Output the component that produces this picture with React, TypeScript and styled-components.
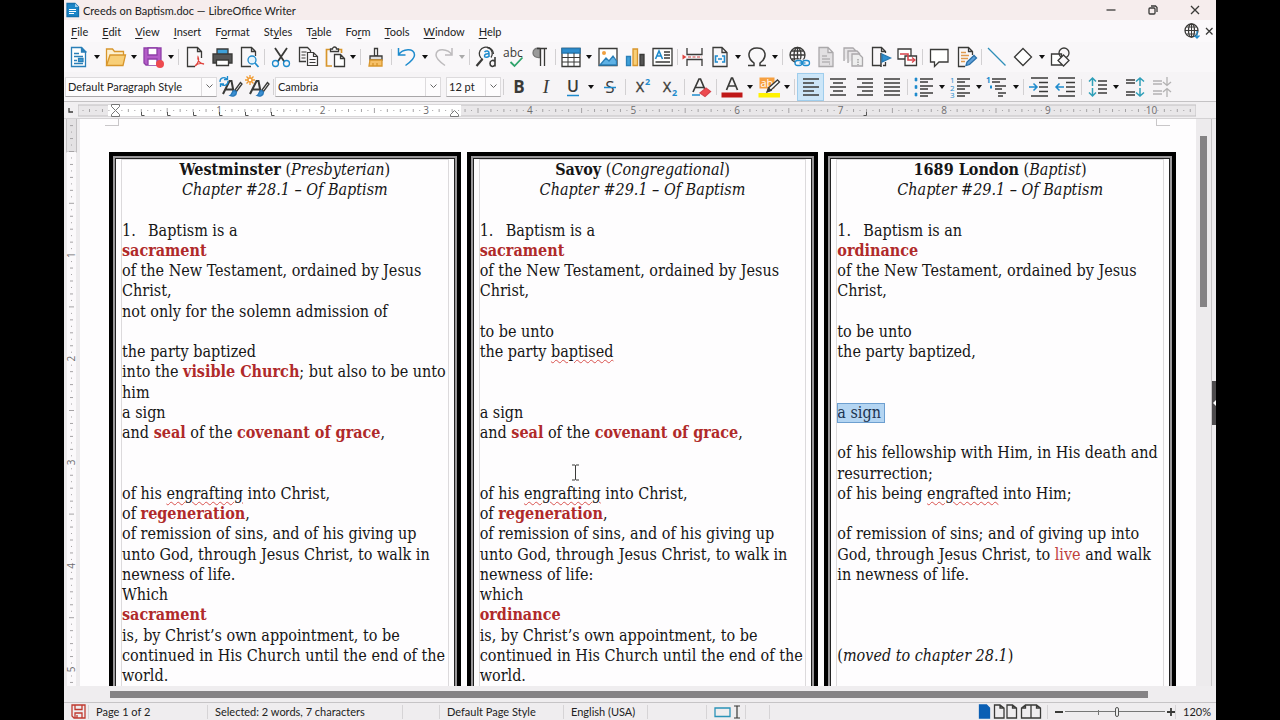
import React from "react";
import styled, { createGlobalStyle, css } from "styled-components";

const ui = `Lato, "Open Sans", sans-serif`;
const serif = `"DejaVu Serif Condensed", "DejaVu Serif", serif`;
const K = "#3a3a38";
const B = "#1e8bcd";
const INCH = 103.6;

const Global = createGlobalStyle`
  *, *::before, *::after { box-sizing: border-box; }
  body { margin: 0; background: #000; }
  button, input { font: inherit; color: inherit; }
  svg { display: block; flex: none; overflow: visible; }
`;

const Desktop = styled.div`
  height: 100vh;
  min-height: 400px;
  padding: 0 5vw;
  background: #000;
  overflow: hidden;
`;

const Window = styled.div`
  display: flex;
  flex-direction: column;
  height: 100%;
  overflow: hidden;
  background: #f3f1f3;
  color: #222;
  font-family: ${ui};
  font-size: 11px;
`;

const TitleBar = styled.header`
  display: flex;
  align-items: center;
  flex: 0 0 20px;
  padding-left: 2px;
  background: #f6eded;
`;

const Title = styled.h1`
  flex: 1;
  margin: 0 0 0 4px;
  font-size: 11px;
  font-weight: 400;
`;

const PlainButton = styled.button`
  display: flex;
  align-items: center;
  justify-content: center;
  padding: 0;
  border: 0;
  background: none;
`;

const WindowButton = styled(PlainButton)`
  width: 42px;
  height: 20px;
`;

const MenuBar = styled.nav`
  display: flex;
  align-items: center;
  flex: 0 0 22px;
  gap: 14px;
  padding-left: 7px;
  background: #fbf9fb;
`;

const MenuButton = styled(PlainButton)`
  u { text-underline-offset: 2px; }
`;

const MenuEnd = styled.div`
  display: flex;
  align-items: center;
  gap: 4px;
  margin-left: auto;
  padding-right: 2px;
`;

const Toolbar = styled.div<{ $line?: boolean }>`
  display: flex;
  align-items: center;
  flex: 0 0 30px;
  padding-left: 1px;
  background: ${(p) => (p.$line ? "#f6f4f6" : "#f9f7f9")};
  border-bottom: ${(p) => (p.$line ? "1px solid #c4c2c4" : "0")};
`;

const Tool = styled(PlainButton)<{ $active?: boolean }>`
  flex: 0 0 27px;
  height: 28px;
  ${(p) =>
    p.$active &&
    css`
      background: #cce6f8;
      border: 1px solid #9fcdec;
    `}
`;

const DropButton = styled(PlainButton)`
  flex: 0 0 10px;
  height: 28px;
`;

const Divider = styled.span<{ $narrow?: boolean }>`
  flex: 0 0 ${(p) => (p.$narrow ? 4 : 5)}px;
  height: 16px;
  background: linear-gradient(#d2d0d2, #d2d0d2) center / 1px 100% no-repeat;
`;

const Combo = styled.div<{ $width: number; $gap?: number }>`
  display: flex;
  flex: 0 0 ${(p) => p.$width}px;
  min-width: 0;
  width: ${(p) => p.$width}px;
  height: 20px;
  margin-right: ${(p) => p.$gap || 0}px;
  border: 1px solid #dddbdd;
  border-bottom-color: #a8a6a8;
  background: #fdfcfd;
`;

const ComboInput = styled.input`
  flex: 1;
  width: 0;
  min-width: 0;
  padding: 0 2px;
  border: 0;
  outline: 0;
  background: none;
`;

const ComboArrow = styled(PlainButton)`
  flex: 0 0 15px;
  border-left: 1px solid #dddbdd;
`;

const RulerRow = styled.div`
  display: flex;
  flex: 0 0 17px;
  background: #f1eff1;
  border-bottom: 1px solid #d4d2d4;
`;

const TabKind = styled(PlainButton)`
  flex: 0 0 14px;
`;

const RulerTrack = styled.div`
  flex: 1;
  min-width: 0;
  margin-right: 20px;
  overflow: hidden;
`;

const Workspace = styled.main`
  display: flex;
  flex: 1;
  min-height: 0;
  background: #edebed;
`;

const SideRuler = styled.div`
  flex: 0 0 16px;
  overflow: hidden;
`;

const Page = styled.article`
  position: relative;
  display: grid;
  grid-template-columns: repeat(3, 1fr);
  gap: 6px;
  flex: 1;
  min-width: 0;
  padding: 33px 20px 0 29px;
  overflow: hidden;
  background: #fefdfe;
`;

const Crop = styled.span<{ $right?: boolean }>`
  position: absolute;
  top: 0;
  width: 14px;
  height: 7px;
  border-bottom: 1px solid #c9c7c9;
  ${(p) =>
    p.$right
      ? "right: 26px; border-left: 1px solid #c9c7c9;"
      : "left: 25px; border-right: 1px solid #c9c7c9;"}
`;

const Frame = styled.section`
  min-width: 0;
  height: 640px;
  padding: 1px 8px 0 8px;
  border: 4px solid #000;
  box-shadow: inset 0 0 0 2px #9a989a, inset 0 0 0 3px #222;
`;

const Column = styled.div`
  height: 100%;
  margin-top: 2px;
  border: 1px solid #dcdadc;
  border-bottom: 0;
  color: #161616;
  font-family: ${serif};
  font-size: 16px;
  line-height: 20px;
  white-space: nowrap;
`;

const Line = styled.p<{ $center?: boolean }>`
  height: 20px;
  margin: 0;
  text-align: ${(p) => (p.$center ? "center" : "left")};
  &:nth-child(4n + 3) { margin-bottom: 1px; }
`;

const Num = styled.span`
  display: inline-block;
  width: 26px;
`;

const Key = styled.strong`
  color: #b02a2a;
`;

const Soft = styled.span`
  color: #c0403c;
`;

const Misspelt = styled.span`
  text-decoration: underline wavy #d9534f 1px;
  text-underline-offset: 2px;
`;

const Selected = styled.mark`
  display: inline-block;
  height: 20px;
  padding-right: 4px;
  background: #b4d5f2;
  outline: 1px solid #6d9fd0;
  outline-offset: -1px;
  color: #1c3350;
`;

const ScrollY = styled.div`
  flex: 0 0 16px;
  padding: 17px 4px 0 4px;
  border-right: 1px solid #c6c4c6;
`;

const ThumbY = styled.div`
  width: 7px;
  height: 171px;
  background: #858385;
`;

const SideHandle = styled.div`
  display: flex;
  align-items: center;
  flex: 0 0 4px;
`;

const HandleButton = styled(PlainButton)`
  width: 4px;
  height: 44px;
  background: #4d4b4d;
`;

const ScrollX = styled.div`
  display: flex;
  align-items: center;
  flex: 0 0 16px;
  padding: 0 68px 0 46px;
  background: #efedef;
  &::before { content: ""; flex: 1; height: 7px; background: #858385; }
`;

const StatusBar = styled.footer`
  display: flex;
  align-items: center;
  flex: 0 0 18px;
  border-top: 1px solid #c6c4c6;
  background: #efedef;
`;

const Cell = styled.div<{ $w: number; $end?: boolean; $plain?: boolean }>`
  display: flex;
  align-items: center;
  flex: 0 0 ${(p) => p.$w}px;
  min-width: 0;
  height: 14px;
  padding-left: 7px;
  margin-left: ${(p) => (p.$end ? "auto" : "0")};
  border-right: 1px solid ${(p) => (p.$plain ? "transparent" : "#d6d4d6")};
  white-space: nowrap;
`;

const ZoomRange = styled.input`
  flex: 0 0 100px;
  width: 100px;
  height: 14px;
  margin: 0 2px;
  appearance: none;
  background: linear-gradient(#777, #777) center / 100% 1px no-repeat,
    linear-gradient(#777, #777) 33px 5px / 1px 5px no-repeat;
  &::-webkit-slider-thumb {
    appearance: none;
    width: 4px;
    height: 10px;
    border: 1px solid #555;
    border-radius: 2px;
    background: #eee;
  }
`;

const Pointer = styled.div`
  position: absolute;
  left: 44%;
  top: 345px;
`;

const Svg = ({ children, w = 24, h = 24 }: { children: React.ReactNode; w?: number; h?: number }) => (
  <svg width={w} height={h} viewBox={`0 0 ${w} ${h}`} fill="none" stroke={K} strokeWidth="1.3" aria-hidden="true">
    {children}
  </svg>
);

const sheet = "M5 2.5h9l5 5v14H5z M14 2.5v5h5";
const brushA = (
  <>
    <path d="M4 19 10.500 6h2L15 19M7 14.500h7" strokeWidth="2" />
    <path d="M21.500 7.500 16 15l1.500 1.500L23 9z" fill="#fff" />
    <path d="M15.500 15.500c-3 0-2 4-4.500 5 3 1.500 6.500 0 6.500-3.500z" fill="#3b8fd2" stroke="#2878b8" />
  </>
);
const bars = (rows: [number, number, number][]) =>
  rows.map(([y, a, b]) => <path key={y} d={`M${a} ${y}H${b}`} strokeWidth="1.500" />);

const icons: Record<string, React.ReactNode> = {
  new: <><path d="M4.500 2.500h10l4 4v15h-14z" stroke="#2a7fb8" fill="#fff" /><path d="M14.500 2v5h5" fill="#2a7fb8" stroke="#2a7fb8" /><path d="M7 8.500h5M7 11.500h9M7 18.500h9M7 15.500h3" stroke="#2a7fb8" strokeWidth="1.500" /><path d="M11.500 13.500h4.500v3h-4.500z" fill="#3fa0d8" stroke="#2a7fb8" /></>,
  open: <><path d="M2.500 20V4h6l2 2.500h9V10" fill="#fdf0d0" stroke="#d8962c" /><path d="M2.500 20.500 6 10h15.500L19 20.500z" fill="#f8cf78" stroke="#d8962c" /></>,
  save: <><path d="M3 3h17v17H5l-2-2z" fill="#b45cc8" stroke="#8f3fa8" /><path d="M7 3h9v7H7z" fill="#fff" stroke="#8f3fa8" /><path d="M7 20v-6h9v6" fill="#fff" stroke="#8f3fa8" /><circle cx="19" cy="19" r="4" fill="#ee4a4f" stroke="none" /></>,
  pdf: <><path d="M12 21.500H4.500v-19h10l4 4V13M14.500 2.500v4h4" fill="none" /><path d="M12 21c4-3 4-7 3-9-1 3 2 7 6 7-3-1-7 0-9 2z" stroke="#e0443e" /></>,
  print: <><path d="M7 9V4h11v5" fill="#3fa0d8" stroke={K} /><path d="M3 9h19v9H3z" fill="#555" stroke={K} /><path d="M6.500 15h12v5.500h-12z" fill="#fff" /></>,
  preview: <><path d="M14 21.500H4.500v-19h10l4 4V11M14.500 2.500v4h4" /><circle cx="15" cy="15" r="4" stroke={B} fill="#e6f4fc" /><path d="m18 18 3.500 4" stroke={B} strokeWidth="1.800" /></>,
  cut: <><path d="M6 3 15.500 17M18 3 8.500 17" strokeWidth="1.800" /><circle cx="6.500" cy="18.500" r="3" stroke={B} /><circle cx="17.500" cy="18.500" r="3" stroke={B} /></>,
  copy: <><path d="M10 16.500H3.500v-14h8l3 3V7" /><path d="M11.500 7.500h6l4 4v9h-10zM17.500 7.500v4h4M5.500 7h5M5.500 10h4M5.500 13h4M13.500 14.500h6M13.500 17.500h6" strokeWidth="1.200" /></>,
  paste: <><path d="M9 21H3.500V4.500H7M15 4.500h3.500V8" stroke="#d8962c" strokeWidth="1.700" /><path d="M7.500 6.500V4h2a2 2 0 0 1 4 0h2v2.500z" fill="#fff" /><path d="M11.500 9.500h6l4 4v8h-10zM17.500 9.500v4h4" fill="#fff" /></>,
  brush: <><path d="M10.500 3.500h3V11h-3z" fill="#fff" /><path d="M6 11h12v4H6z" fill="#ddd" /><path d="M6 15h12v6H5z" fill="#f6c068" stroke="#d8962c" /><path d="M9 21v-3M13 21v-3" stroke="#d8962c" /></>,
  undo: <path d="M3.500 3v7h7M3.500 10c4-6.500 16-7.500 16 0 0 4-4 7-9 10.500" stroke={B} strokeWidth="1.500" />,
  redo: <path d="M20 3v7h-7M20 10c-4-6.500-16-7.500-16 0 0 4 4 7 9 10.500" stroke="#bdbbbd" strokeWidth="1.500" />,
  find: <><path d="M17 12.500A6.500 6.500 0 1 0 9 14.500" /><path d="M19.500 9A6.500 6.500 0 0 0 13 2.500" /><path d="m8.500 14-6 7" strokeWidth="2.200" /><path d="M10.500 7c2-2 4.500-1 4.500 1v4M15 9c-3-.500-4.500.500-4.500 2s3 2 4.500 0" stroke={B} strokeWidth="1.500" /><path d="M21 12v9.500M21 16.500c-2-2-5-1-5 2s3 4 5 1.500" strokeWidth="1.600" /></>,
  spell: <><text x="2" y="12" fontSize="12" fontFamily="Open Sans" fill={K} stroke="none">abc</text><path d="m9.500 17 4 4 8-8.500" stroke="#2fa36b" strokeWidth="1.800" /></>,
  pilcrow: <><path d="M12 3.500C7 2.500 5 5 5 8s2.500 5 7 4.500z" fill="#9a9a9a" stroke="#777" /><path d="M9 3.500h10M12.500 3.500V21M16.500 3.500V21" /></>,
  table: <><path d="M3 3.500h18v18H3z" fill="#fff" /><path d="M3 3.500h18V8H3z" fill="#2f8fd0" stroke="#2678b0" /><path d="M3 12.500h18M3 17h18M9 8v13M15 8v13" strokeWidth="1" /></>,
  image: <><path d="M3 3.500h18v17H3z" fill="#fff" /><circle cx="8" cy="8" r="2" fill="#f0a040" stroke="none" /><path d="m4 20 6-7 3 3 4-5 3.500 5v4z" fill="#5fb2e6" stroke="#2a7fb8" /></>,
  chart: <><path d="M3.500 11.500h4v9h-4z" fill="#3fa0d8" stroke="#2a7fb8" /><path d="M10 4h4.500v16.500H10z" fill="#f8cf78" stroke="#d8962c" /><path d="M17 9.500h4v11h-4z" fill="#555" /></>,
  textbox: <><path d="M3 3.500h19v17H3z" fill="#fff" /><path d="m5.500 14 3.500-8 3.500 8M7 11h4" stroke={B} strokeWidth="1.600" /><path d="M14 7h6M14 10h6M14 13h6M5.500 17h14.500" /></>,
  pagebreak: <><path d="M6 3v6.500h15V3M6 21v-6.500h15V21" /><path d="M7 12h14" stroke="#e08080" strokeDasharray="3 1.500" /><path d="m1.500 9.500 4 2.500-4 2.500z" fill="#e0443e" stroke="none" /></>,
  field: <><path d={sheet} /><path d="M10 11H7.500v6H10M14 11h2.500v6H14M10 14h4" stroke={B} strokeWidth="1.600" /></>,
  omega: <path d="M3 20.500h6V18C1 12 3 3 12 3s11 9 3 15v2.500h6" strokeWidth="1.500" />,
  link: <><circle cx="10.500" cy="10" r="7.500" /><path d="M3 10h15M10.500 2.500v15M4.500 6h12M4.500 14h8" /><ellipse cx="10.500" cy="10" rx="3.500" ry="7.500" /><path d="M8 14.500h15v7H8z" fill="#f9f7f9" stroke="none" /><rect x="8" y="15.500" width="7" height="5" rx="2.500" stroke={B} /><rect x="15.500" y="15.500" width="7" height="5" rx="2.500" stroke={B} /><path d="M12.500 18h6" stroke={B} /></>,
  footnote: <><path d={sheet} fill="#e2e0e2" stroke="#aaa8aa" /><path d="M8 17h8M8 14h8M8 11h5M15 19h1" stroke="#b5b3b5" /></>,
  endnote: <><path d="M3 16V3h9l3 3M7 18V6h9l3 3" fill="#e8e6e8" stroke="#aaa8aa" /><path d="M11 9h7l3.500 3.500V21H11z" fill="#eee" stroke="#aaa8aa" /><path d="M17 14v6" stroke="#999" strokeDasharray="1.500 1" /></>,
  bookmark: <><path d="M13 20.500H4.500v-18h9l4 4V8M13.500 2.500v4h4M17.500 17v3.500H15" /><path d="M13 8v14" strokeWidth="1.500" /><path d="m14 9 8.500 4-8.500 4z" fill="#2f8fd0" stroke="#2678b0" /></>,
  crossref: <><path d="M3 4h13v10H3z" fill="#fff" /><path d="M10 11h11.500v9.500H10z" fill="#fff" /><path d="M5 9h8v6h6" stroke="#d8444c" strokeWidth="1.600" /><path d="m17 12.500 3 2.500-3 2.500" stroke="#d8444c" /></>,
  comment: <path d="M3.500 4.500h17.500V17H12l-4.500 4.500V17h-4z" fill="#fff" />,
  track: <><path d="M11 21.500H4.500v-19h10l4 4V10M14.500 2.500v4h4" /><path d="M7 7.500h5M7 10.500h8M7 13.500h7M7 16.500h4" stroke="#e09a50" /><path d="m12 20.500 1-3.500 7-6.500 2.500 2.500-7 6.500z" fill="#5f9fd8" stroke="#2a6fa8" /></>,
  line: <path d="M3 3 20.500 20.500" stroke="#2f8fb8" />,
  shapes: <path d="m11 3.500 8.500 8.500-8.500 8.500L2.500 12z" fill="#fff" />,
  draw: <><path d="M2.500 9h10v11h-10z" fill="#fff" /><circle cx="15" cy="8" r="5" /><path d="m14.500 10 5.500 5.500-5.500 5.500-5.500-5.500z" fill="#f9f7f9" /></>,
  styleUpdate: <>{brushA}<path d="M1 7a4 4 0 0 1 7-3M8.500 1v3.500H5M9 6a4 4 0 0 1-7 3M1.500 12V9H5" stroke={B} /></>,
  styleNew: <>{brushA}<path d="M4 0v10M-1 5h10M.500 1.500l7 7M7.500 1.500l-7 7" stroke="#f09a30" /><circle cx="4" cy="5" r="2" fill="#fff" stroke="#f09a30" /></>,
  clear: <><path d="m4 17 6-13h1.500L17 17M6.500 12.500h8.500" strokeWidth="1.700" /><path d="M3 20h8" stroke={B} strokeWidth="1.500" /><path d="m11 18 6-5 4.500 3.500-5.500 5z" fill="#ee4a4f" stroke="#d8444c" /></>,
  color: <><path d="m6.500 15 5-12h1l5 12M8 11h8" strokeWidth="1.700" /><path d="M1.500 17.500h21v5h-21z" fill="#c01818" stroke="none" /></>,
  highlight: <><path d="M2.500 2.500h15v11h-15z" fill="#f6a040" stroke="none" /><text x="3.500" y="11.500" fontSize="11" fontFamily="Open Sans" fill="#fff" stroke="none">ab</text><path d="M1.500 18h21.500v4.500H1.500z" fill="#fff200" stroke="none" /><path d="m10.500 16.500 1.500-4L20.500 5l2 2-8.500 8z" fill="#fff" /><path d="m10 17 1.500-4 2.500 2.500z" fill={K} /></>,
  left: bars([[4, 4, 20], [8, 4, 15], [12, 4, 20], [16, 4, 15], [20, 4, 20]]),
  center: bars([[4, 4, 20], [8, 7, 17], [12, 4, 20], [16, 7, 17], [20, 4, 20]]),
  right: bars([[4, 4, 20], [8, 9, 20], [12, 4, 20], [16, 9, 20], [20, 4, 20]]),
  justify: bars([[4, 4, 20], [8, 4, 20], [12, 4, 20], [16, 4, 20], [20, 4, 20]]),
  bullets: <><path d="M3 3h2v3H3zM3 10.500h2v3H3zM3 18h2v3H3z" fill={B} stroke={B} strokeWidth=".6" />{bars([[4, 8, 21], [7, 8, 16], [11, 8, 21], [14, 8, 16], [18, 8, 21], [21, 8, 16]])}</>,
  numbers: <><g fontSize="8" fontFamily="Open Sans" fill={B} stroke="none"><text x="1" y="8">1</text><text x="1" y="15.500">2</text><text x="1" y="23">3</text></g>{bars([[4, 8, 21], [7, 8, 16], [11, 8, 21], [14, 8, 16], [18, 8, 21], [21, 8, 16]])}</>,
  outline: <><text x="0" y="8" fontSize="8" fontWeight="700" fontFamily="Open Sans" fill={B} stroke="none">1</text><path d="M4 10.500h2v3H4z" fill={B} stroke="none" />{bars([[4, 6, 20], [7, 6, 14], [11, 9, 20], [14, 9, 16], [18, 12, 20], [21, 12, 17]])}</>,
  indent: <>{bars([[3, 4, 21], [7.5, 12, 21], [12, 12, 21], [16.5, 12, 21], [21, 4, 21]])}<path d="M2 12h8M6.500 8.500 10 12l-3.500 3.500" stroke={B} strokeWidth="1.500" /></>,
  outdent: <>{bars([[3, 4, 21], [7.5, 12, 21], [12, 12, 21], [16.5, 12, 21], [21, 4, 21]])}<path d="M2 12h8M5.500 8.500 2 12l3.500 3.500" stroke={B} strokeWidth="1.500" /></>,
  spacing: <>{bars([[6, 12, 21], [10, 12, 21], [14, 12, 21], [18, 12, 21]])}<path d="M6.500 3v8M3 6.500 6.500 3 10 6.500M6.500 13v8M3 17.500 6.500 21l3.500-3.500" stroke="#2f9fb8" strokeWidth="1.500" /></>,
  paraUp: <>{bars([[5, 3, 12], [8, 3, 12], [17, 3, 12], [20, 3, 12]])}<path d="M17 3v8M13 6.500 17 3l4 3.500M17 13v8M13 17.500l4 3.500 4-3.500" stroke="#2f9fb8" strokeWidth="1.500" /></>,
  paraDown: <g opacity=".35">{bars([[6, 3, 12], [9, 3, 12], [16, 3, 12], [19, 3, 12]])}<path d="M17 2v8M13 7l4 3.500L21 7M17 22v-8M13 17l4-3.500 4 3.500" /></g>,
};

const letter = (main: string, extra?: React.ReactNode, props: React.SVGProps<SVGTextElement> = {}) => (
  <>
    <text x="12" y="18" textAnchor="middle" fontFamily="Open Sans" fontSize="17" fill={K} stroke="none" {...props}>{main}</text>
    {extra}
  </>
);
const script = (y: number) => (
  <text x="15" y={y} fontFamily="Open Sans" fontWeight="700" fontSize="9" fill={B} stroke="none">2</text>
);
icons.bold = letter("B", null, { fontWeight: 700 });
icons.italic = letter("I", null, { fontStyle: "italic", fontFamily: "Liberation Serif", fontSize: 19 });
icons.underline = letter("U", <path d="M6 20.500h12" stroke={B} strokeWidth="1.500" />, { fontSize: 16, y: 17, fontWeight: 600 });
icons.strike = letter("S", <path d="M6 12.500h12" stroke={B} strokeWidth="1.500" />);
icons.sup = letter("X", script(10), { fontSize: 14, x: 10, y: 17, stroke: K, strokeWidth: 0.4 });
icons.sub = letter("X", script(21), { fontSize: 14, x: 10, y: 17, stroke: K, strokeWidth: 0.4 });

type Item = [string, string, "drop"?] | "|" | ":";

const standard: Item[] = [
  ["new", "New", "drop"], ["open", "Open", "drop"], ["save", "Save", "drop"], "|",
  ["pdf", "Export as PDF"], ["print", "Print"], ["preview", "Print preview"], "|",
  ["cut", "Cut"], ["copy", "Copy"], ["paste", "Paste", "drop"], ":",
  ["brush", "Clone formatting"], ":",
  ["undo", "Undo", "drop"], ["redo", "Redo", "drop"], "|",
  ["find", "Find and replace"], ["spell", "Spelling"], ["pilcrow", "Formatting marks"], ":",
  ["table", "Insert table", "drop"], ["image", "Insert image"], ["chart", "Insert chart"], ["textbox", "Insert text box"], ":",
  ["pagebreak", "Page break"], ["field", "Insert field", "drop"], ["omega", "Special character", "drop"], "|",
  ["link", "Hyperlink"], ["footnote", "Footnote"], ["endnote", "Endnote"], ["bookmark", "Bookmark"], ["crossref", "Cross-reference"], "|",
  ["comment", "Comment"], ["track", "Track changes"], ":",
  ["line", "Line"], ["shapes", "Basic shapes", "drop"], ["draw", "Draw functions"],
];

const styleTools: Item[] = [["styleUpdate", "Update style"], ["styleNew", "New style"], ":"];

const formatting: Item[] = [
  ":", ["bold", "Bold"], ["italic", "Italic"], ["underline", "Underline", "drop"], ["strike", "Strikethrough"], "|",
  ["sup", "Superscript"], ["sub", "Subscript"], "|",
  ["clear", "Clear formatting"], ":", ["color", "Font color", "drop"], ["highlight", "Highlighting", "drop"], "|",
  ["left", "Align left"], ["center", "Align center"], ["right", "Align right"], ["justify", "Justify"], "|",
  ["bullets", "Bullets", "drop"], ["numbers", "Numbering", "drop"], ["outline", "Outline", "drop"], ":",
  ["indent", "Increase indent"], ["outdent", "Decrease indent"], "|",
  ["spacing", "Line spacing", "drop"], ["paraUp", "Increase paragraph spacing"], ["paraDown", "Decrease paragraph spacing"],
];

const Tools = ({ items }: { items: Item[] }) => (
  <>
    {items.map((it, i) =>
      typeof it === "string" ? (
        <Divider key={i} $narrow={it === ":"} />
      ) : (
        <React.Fragment key={i}>
          <Tool type="button" aria-label={it[1]} $active={it[0] === "left"}>
            <Svg>{icons[it[0]]}</Svg>
          </Tool>
          {it[2] && (
            <DropButton type="button" aria-label={`${it[1]} options`}>
              <svg width="6" height="4" aria-hidden="true">
                <path d="M0 0h6L3 4z" fill={it[0] === "redo" ? "#aaa" : "#111"} />
              </svg>
            </DropButton>
          )}
        </React.Fragment>
      )
    )}
  </>
);

const ComboBox = ({ label, value, width, gap }: { label: string; value: string; width: number; gap?: number }) => (
  <Combo $width={width} $gap={gap}>
    <ComboInput aria-label={label} defaultValue={value} />
    <ComboArrow type="button" aria-label={`${label} list`}>
      <svg width="7" height="5" fill="none" stroke="#666" aria-hidden="true"><path d="m.5.500 3 3 3-3" /></svg>
    </ComboArrow>
  </Combo>
);

const ticks = (from: number, to: number) => {
  const out: { p: number; i: number }[] = [];
  for (let i = from; i <= to; i++) out.push({ p: (i * INCH) / 16, i });
  return out;
};
const tickSize = (i: number) => (i % 8 === 0 ? 5 : i % 2 === 0 ? 3 : 1);

const HorizontalRuler = () => (
  <svg width="100%" height="16" aria-hidden="true">
    <rect x="0" y="3" width="100%" height="11" fill="#e9e7e9" stroke="#c2c0c2" />
    <rect x="30" y="3" width="353" height="11" fill="#fff" />
    <g stroke="#a5a3a5">
      {ticks(-5, 167).filter((t) => t.i % 16 !== 0).map((t) => (
        <path key={t.i} d={`M${37.4 + t.p} ${8.5 - tickSize(t.i) / 2}v${tickSize(t.i)}`} />
      ))}
    </g>
    <g fontFamily="Open Sans" fontSize="10" fill="#6e6c6e" textAnchor="middle">
      {[1, 2, 3, 4, 5, 6, 7, 8, 9, 10].map((n) => (
        <text key={n} x={37.4 + n * INCH} y="12">{n}</text>
      ))}
    </g>
    <g fill="none" stroke="#555">
      {[63, 89, 115, 141, 167, 193].map((x) => <path key={x} d={`M${x}.5 10v3.500h3`} />)}
      <path d="M788.500 10v3.500h-3" />
    </g>
    <g fill="#fff" stroke="#777">
      <path d="M33.500 2.500h8v2l-4 4-4-4zM33.500 14.500h8v-2l-4-4-4 4z" />
      <path d="M372.500 14.500h8v-2l-4-4-4 4z" />
    </g>
  </svg>
);

const VerticalRuler = () => (
  <svg width="16" height="100%" aria-hidden="true">
    <rect x="2.500" y="-1" width="10" height="34" fill="#e4e2e4" stroke="#c2c0c2" />
    <rect x="3" y="33" width="9" height="100%" fill="#fbf9fb" />
    <g stroke="#a5a3a5">
      {ticks(-4, 88).filter((t) => t.i % 16 !== 0 || t.i === 0).map((t) => (
        <path key={t.i} d={`M${7.5 - tickSize(t.i) / 2} ${32.5 + t.p}h${tickSize(t.i)}`} />
      ))}
    </g>
    <g fontFamily="Open Sans" fontSize="10" fill="#6e6c6e" textAnchor="middle">
      {[1, 2, 3, 4, 5].map((n) => (
        <text key={n} transform={`translate(11 ${32.5 + n * INCH}) rotate(-90)`}>{n}</text>
      ))}
    </g>
  </svg>
);

const L = (n: string) => <><Num>1.</Num>{n}</>;
const seal = <>and <Key>seal</Key> of the <Key>covenant of grace</Key>,</>;
const engrafting = <>of his <Misspelt>engrafting</Misspelt> into Christ,</>;
const regeneration = <>of <Key>regeneration</Key>,</>;

const columns: React.ReactNode[][] = [
  [
    <><b>Westminster</b> (<i>Presbyterian</i>)</>, <i>Chapter #28.1 – Of Baptism</i>, "",
    L("Baptism is a"), <Key>sacrament</Key>, "of the New Testament, ordained by Jesus", "Christ,",
    "not only for the solemn admission of", "", "the party baptized",
    <>into the <Key>visible Church</Key>; but also to be unto</>, "him", "a sign", seal, "", "",
    engrafting, regeneration, "of remission of sins, and of his giving up",
    "unto God, through Jesus Christ, to walk in", "newness of life.", "Which", <Key>sacrament</Key>,
    "is, by Christ’s own appointment, to be", "continued in His Church until the end of the", "world.",
  ],
  [
    <><b>Savoy</b> (<i>Congregational</i>)</>, <i>Chapter #29.1 – Of Baptism</i>, "",
    L("Baptism is a"), <Key>sacrament</Key>, "of the New Testament, ordained by Jesus", "Christ,",
    "", "to be unto", <>the party <Misspelt>baptised</Misspelt></>, "", "", "a sign", seal, "", "",
    engrafting, regeneration, "of remission of sins, and of his giving up",
    "unto God, through Jesus Christ, to walk in", "newness of life:", "which", <Key>ordinance</Key>,
    "is, by Christ’s own appointment, to be", "continued in His Church until the end of the", "world.",
  ],
  [
    <><b>1689 London</b> (<i>Baptist</i>)</>, <i>Chapter #29.1 – Of Baptism</i>, "",
    L("Baptism is an"), <Key>ordinance</Key>, "of the New Testament, ordained by Jesus", "Christ,",
    "", "to be unto", "the party baptized,", "", "", <Selected>a sign</Selected>, "",
    "of his fellowship with Him, in His death and", "resurrection;",
    <>of his being <Misspelt>engrafted</Misspelt> into Him;</>, "",
    "of remission of sins; and of giving up into", <>God, through Jesus Christ, to <Soft>live</Soft> and walk</>,
    "in newness of life.", "", "", "", <>(<i>moved to chapter 28.1</i>)</>,
  ],
];

const menus: [string, string, string][] = [
  ["", "F", "ile"], ["", "E", "dit"], ["", "V", "iew"], ["", "I", "nsert"], ["F", "o", "rmat"], ["St", "y", "les"],
  ["T", "a", "ble"], ["Fo", "r", "m"], ["", "T", "ools"], ["", "W", "indow"], ["", "H", "elp"],
];

export default function App() {
  return (
    <Desktop>
      <Global />
      <Window>
        <TitleBar>
          <Svg w={13} h={16}>
            <path d="M1 1.500h8l3.500 3.500v9.500H1z" fill="#1c86c8" stroke="#1670ac" />
            <path d="M9 1.500V5h3.500" fill="#9fd0f0" stroke="none" />
            <path d="M3 7.500h7M3 9.500h7M3 11.500h5" stroke="#fff" strokeWidth="1" />
          </Svg>
          <Title>Creeds on Baptism.doc — LibreOffice Writer</Title>
          <WindowButton type="button" aria-label="Minimize"><Svg w={10} h={10}><path d="M.5 5h9" /></Svg></WindowButton>
          <WindowButton type="button" aria-label="Restore"><Svg w={10} h={10}><rect x="1" y="3" width="6" height="6" rx="1" /><path d="M3 1h4.500L9 2.500V7" /></Svg></WindowButton>
          <WindowButton type="button" aria-label="Close"><Svg w={10} h={10}><path d="m1 1 8 8M9 1 1 9" /></Svg></WindowButton>
        </TitleBar>
        <MenuBar>
          {menus.map(([a, u, b]) => (
            <MenuButton type="button" key={a + u + b}><span>{a}<u>{u}</u>{b}</span></MenuButton>
          ))}
          <MenuEnd>
            <PlainButton type="button" aria-label="Check for updates">
              <Svg w={16} h={16}>
                <circle cx="7.500" cy="7.500" r="6.500" />
                <ellipse cx="7.500" cy="7.500" rx="3" ry="6.500" />
                <path d="M1 7.500h13M7.500 1v13M2.500 4h10M2.500 11h9" strokeWidth="1" />
                <path d="M13 8v7M10.500 12.500 13 15l2.500-2.500" stroke={B} />
              </Svg>
            </PlainButton>
            <PlainButton type="button" aria-label="Close document"><Svg w={10} h={10}><path d="m2 2 6.500 6.500M8.500 2 2 8.500" /></Svg></PlainButton>
          </MenuEnd>
        </MenuBar>
        <Toolbar><Tools items={standard} /></Toolbar>
        <Toolbar $line>
          <ComboBox label="Paragraph style" value="Default Paragraph Style" width={152} />
          <Tools items={styleTools} />
          <ComboBox label="Font name" value="Cambria" width={166} gap={5} />
          <ComboBox label="Font size" value="12 pt" width={55} />
          <Tools items={formatting} />
        </Toolbar>
        <RulerRow>
          <TabKind type="button" aria-label="Tab type"><Svg w={8} h={8}><path d="M2 2v4h4" /></Svg></TabKind>
          <RulerTrack><HorizontalRuler /></RulerTrack>
        </RulerRow>
        <Workspace>
          <SideRuler><VerticalRuler /></SideRuler>
          <Page>
            <Crop />
            <Crop $right />
            {columns.map((lines, c) => (
              <Frame key={c}>
                <Column>
                  {lines.map((text, i) => <Line key={i} $center={i < 2}>{text}</Line>)}
                </Column>
              </Frame>
            ))}
            <Pointer>
              <Svg w={9} h={17}><path d="M1 1h3l.5.500.500-.500h3M4.500 1.500v14M1 16h3l.500-.500.500.500h3" strokeWidth="1" /></Svg>
            </Pointer>
          </Page>
          <ScrollY><ThumbY /></ScrollY>
          <SideHandle>
            <HandleButton type="button" aria-label="Show sidebar">
              <svg width="3" height="6" aria-hidden="true"><path d="M3 0v6L0 3z" fill="#fff" /></svg>
            </HandleButton>
          </SideHandle>
        </Workspace>
        <ScrollX />
        <StatusBar>
          <Cell $w={25}>
            <Svg w={15} h={15}><path d="M1 1h13v13H3l-2-2zM4 1v4.500h7V1M4 14V9h7v5M6 11v3" stroke="#c0392f" /></Svg>
          </Cell>
          <Cell $w={119}>Page 1 of 2</Cell>
          <Cell $w={195}>Selected: 2 words, 7 characters</Cell>
          <Cell $w={37} />
          <Cell $w={124}>Default Page Style</Cell>
          <Cell $w={84}>English (USA)</Cell>
          <Cell $w={59} />
          <Cell $w={39}>
            <Svg w={28} h={14}><path d="M1 3h15v8.500H1z" stroke="#2a93b8" /><path d="M20 1h2.500l.5.500.500-.500H26M23 1.500v11M20 13h2.500l.500-.500.500.500H26" strokeWidth="1.200" /></Svg>
          </Cell>
          <Cell $w={24} />
          <Cell $w={76} $end>
            <Svg w={64} h={15}>
              <path d="M.5 1h7l3 3v10H.5z" fill="#0a5fb4" stroke="#0a5fb4" />
              <path d="M15.500 1H21l4 3v10h-9.500zM21 1v3h4M28 1h5.500l4 3v10H28zM33.500 1v3h4" />
              <path d="M52 14h-9.500V4l4-3H52zM46.500 1v3h-4M52 1h5.500l4 3v10H52zM57.500 1v3h4" />
            </Svg>
          </Cell>
          <Cell $w={128}>
            <PlainButton type="button" aria-label="Zoom out"><Svg w={8} h={8}><path d="M0 4h8" strokeWidth="2" /></Svg></PlainButton>
            <ZoomRange type="range" aria-label="Zoom" min="0" max="100" defaultValue="52" />
            <PlainButton type="button" aria-label="Zoom in"><Svg w={8} h={8}><path d="M0 4h8M4 0v8" strokeWidth="1.800" /></Svg></PlainButton>
          </Cell>
          <Cell $w={40} $plain>120%</Cell>
        </StatusBar>
      </Window>
    </Desktop>
  );
}
